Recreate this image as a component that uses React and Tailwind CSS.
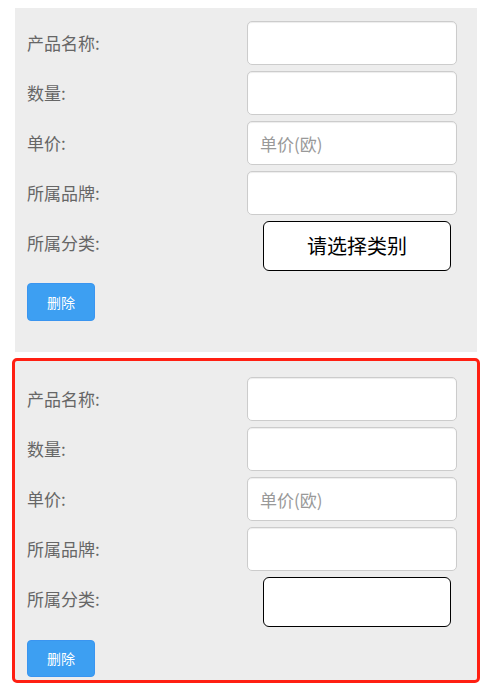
import React from "react";

const font = { fontFamily: '"Noto Sans CJK SC", "Noto Sans", sans-serif' };

function Row({ label, placeholder }) {
  return (
    <div className="flex h-[50px] items-start">
      <div className="w-[220px] h-[44px] leading-[44px] text-[17px] text-[#666]">{label}</div>
      <input
        className="w-[210px] h-[44px] bg-white border border-[#ccc] rounded-[5px] px-[12px] text-[17px] text-[#555] placeholder:text-[#999] shadow-[inset_0_1px_1px_rgba(0,0,0,0.075)] outline-none"
        placeholder={placeholder || ""}
        readOnly
      />
    </div>
  );
}

function Fields({ selectText }) {
  return (
    <>
      <Row label="产品名称:" />
      <Row label="数量:" />
      <Row label="单价:" placeholder="单价(欧)" />
      <Row label="所属品牌:" />
      <div className="flex h-[50px] items-start">
        <div className="w-[236px] h-[44px] leading-[44px] text-[17px] text-[#666]">所属分类:</div>
        <div className="w-[188px] h-[50px] bg-white border border-black rounded-[6px] flex items-center justify-center text-[20px] text-black">
          {selectText}
        </div>
      </div>
    </>
  );
}

export default function App() {
  return (
    <div className="bg-white w-[488px] h-[685px] overflow-hidden" style={font}>
      <div className="ml-[15px] mt-[8px] w-[462px] bg-[#ededed] pt-[13px] pl-[12px] pb-[31px]">
        <Fields selectText="请选择类别" />
        <div className="mt-[12px]">
          <div className="w-[68px] h-[38px] bg-[#3d9ff2] border border-[#3a95f0] rounded-[4px] flex items-center justify-center text-[14px] text-white">
            删除
          </div>
        </div>
      </div>
      <div className="mt-[6px] ml-[12px] w-[468px] border-[3px] border-[#ff1f12] rounded-[5px] bg-[#ededed] pt-[16px] pl-[12px] pb-[3px]">
        <Fields selectText="" />
        <div className="mt-[13px]">
          <div className="h-[37px] w-[68px] bg-[#3d9ff2] border border-[#3a95f0] rounded-[4px] flex items-center justify-center text-[14px] text-white">
            删除
          </div>
        </div>
      </div>
    </div>
  );
}
